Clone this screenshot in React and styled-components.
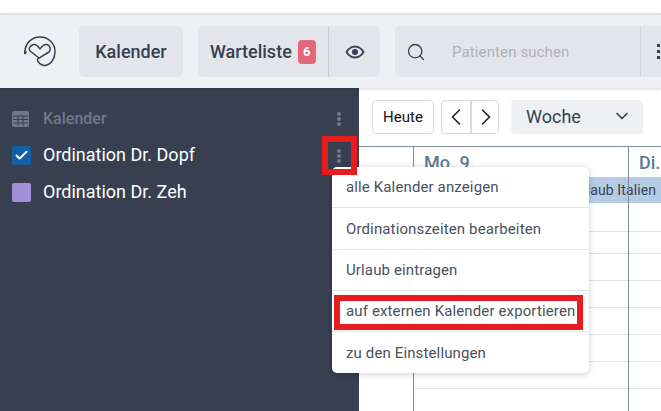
import React from "react"
import styled, { createGlobalStyle } from "styled-components"
import { Search, Check, ChevronDown, ChevronLeft, ChevronRight } from "lucide-react"

const GlobalStyle = createGlobalStyle`
  html, body {
    margin: 0;
    padding: 0;
    overflow: hidden;
    background: #fff;
    font-family: Roboto, "Liberation Sans", sans-serif;
  }
  * { box-sizing: border-box; }
`

const Page = styled.div`
  position: relative;
  width: 661px;
  height: 411px;
  overflow: hidden;
  display: flex;
  flex-direction: column;
  padding-top: 13px;
`

const Header = styled.header`
  position: relative;
  z-index: 2;
  height: 75px;
  flex: none;
  background: #eef0f4;
  border-top: 2px solid #e2e2e2;
  box-shadow: 0 1px 3px rgba(0, 0, 0, 0.16);
  display: flex;
  align-items: center;
  padding: 0 0 0 24px;
  color: #373f51;
`

const Logo = styled.svg`
  width: 32px;
  height: 32px;
  margin-right: 23px;
  flex: none;
`

const Group = styled.div`
  height: 51px;
  flex: none;
  display: flex;
  align-items: center;
  background: #e4e5ea;
  border-radius: 5px;
  width: ${(p) => p.$width}px;
  margin-right: ${(p) => p.$gap || 0}px;
`

const NavLabel = styled.span`
  font-size: 18px;
  font-weight: 500;
  color: #373f51;
  white-space: nowrap;
`

const CenterCell = styled.div`
  flex: 1;
  height: 100%;
  display: flex;
  align-items: center;
  justify-content: center;
`

const WaitCell = styled.div`
  width: 131px;
  height: 100%;
  display: flex;
  align-items: center;
  padding-left: 12px;
  border-right: 1px solid #c9cad0;
`

const Badge = styled.span`
  width: 18px;
  height: 24px;
  margin-left: 6px;
  border-radius: 4px;
  background: #e5687a;
  color: #fff;
  font-size: 13px;
  font-weight: 700;
  display: flex;
  align-items: center;
  justify-content: center;
`

const SearchCell = styled.div`
  width: 246px;
  height: 100%;
  display: flex;
  align-items: center;
  padding-left: 11px;
  border-right: 1px solid #d2d3d8;
  color: #373f51;
`

const SearchText = styled.span`
  margin-left: 26px;
  font-size: 15px;
  letter-spacing: 0.12px;
  color: #b0b2b7;
`

const HeaderDots = styled.span`
  margin-left: 16px;
  display: flex;
  flex-direction: column;
  gap: 3px;
  i {
    width: 3px;
    height: 3px;
    background: #373f51;
  }
`

const Body = styled.div`
  flex: 1;
  display: flex;
  min-height: 0;
`

const Sidebar = styled.aside`
  width: 359px;
  flex: none;
  background: #373f51;
  padding: 12px 12px 0 12px;
`

const SideRow = styled.div`
  height: 37px;
  display: flex;
  align-items: center;
`

const SideTitle = styled.span`
  margin-left: 14px;
  font-size: 16px;
  font-weight: 500;
  color: #70798a;
`

const SideName = styled.span`
  margin-left: 12px;
  padding-bottom: 2px;
  font-size: 18px;
  color: #fff;
`

const Box = styled.span`
  width: 19px;
  height: 19px;
  border-radius: 2px;
  flex: none;
  display: flex;
  align-items: center;
  justify-content: center;
  background: ${(p) => p.$color};
  color: #fff;
`

const Kebab = styled.span`
  margin-left: auto;
  margin-right: 4px;
  width: 8px;
  display: flex;
  flex-direction: column;
  align-items: center;
  gap: 1px;
  i {
    width: 4px;
    height: 4px;
    border-radius: 50%;
    background: #70798a;
  }
`

const Main = styled.main`
  flex: 1;
  min-width: 0;
  background: #fff;
`

const Toolbar = styled.div`
  height: 58px;
  display: flex;
  align-items: center;
  padding-left: 13px;
`

const TodayButton = styled.div`
  width: 62px;
  height: 34px;
  border: 1px solid #d8dbe0;
  border-radius: 4px;
  display: flex;
  align-items: center;
  justify-content: center;
  font-size: 15px;
  color: #111;
  margin-right: 7px;
`

const ArrowGroup = styled.div`
  width: 58px;
  height: 34px;
  border: 1px solid #d8dbe0;
  border-radius: 4px;
  display: flex;
  margin-right: 12px;
  color: #222;
`

const ArrowCell = styled.div`
  flex: 1;
  display: flex;
  align-items: center;
  justify-content: center;
  & + & {
    border-left: 2px solid #d8dbe0;
  }
`

const ViewSelect = styled.div`
  width: 132px;
  height: 34px;
  border-radius: 4px;
  background: #eef0f4;
  display: flex;
  align-items: center;
  justify-content: space-between;
  padding: 0 11px 2px 15px;
  font-size: 18px;
  color: #373f51;
`

const Grid = styled.div`
  border-top: 1px solid #7f8c9b;
  display: grid;
  grid-template-columns: 54px 215px 1fr;
  height: 265px;
`

const Column = styled.div`
  min-width: 0;
  position: relative;
  border-left: ${(p) => (p.$line ? "1px solid #7f8c9b" : "none")};
`

const DayHead = styled.div`
  height: 30px;
  padding: 5px 0 0 10px;
  font-size: 18px;
  font-weight: 500;
  color: #5f7896;
`

/* the event runs over the next day, whose column line stays on top */
const EventBar = styled.div`
  height: 26px;
  width: ${(p) => (p.$span ? "248px" : "auto")};
  background: ${(p) => (p.$span ? "#b5cde4" : "transparent")};
  padding-right: 6px;
  color: #373f51;
  font-size: 14px;
  letter-spacing: 0.1px;
  line-height: 26px;
  white-space: nowrap;
  text-align: right;
`

const Slot = styled.div`
  height: ${(p) => p.$h}px;
  border-bottom: 1px solid #dfe2e6;
`

const Menu = styled.div`
  position: absolute;
  z-index: 3;
  left: 332px;
  top: 167px;
  width: 257px;
  height: 206px;
  background: #fff;
  border-radius: 5px;
  box-shadow: 0 1px 6px rgba(0, 0, 0, 0.2);
`

const MenuItem = styled.div`
  height: ${(p) => p.$h}px;
  padding-left: 14px;
  display: flex;
  align-items: center;
  font-size: 15px;
  letter-spacing: 0.13px;
  color: #4a5060;
  white-space: nowrap;
  border-bottom: ${(p) => (p.$last ? "none" : "1px solid #e4e5e8")};
`

const Mark = styled.div`
  position: absolute;
  z-index: 4;
  border: 6px solid #e81c1e;
  left: ${(p) => p.$x}px;
  top: ${(p) => p.$y}px;
  width: ${(p) => p.$w}px;
  height: ${(p) => p.$h}px;
`

const slots = [29, 22, 27, 27, 27, 27, 27, 27]
const menuItems = [
  ["alle Kalender anzeigen", 41],
  ["Ordinationszeiten bearbeiten", 42],
  ["Urlaub eintragen", 41],
  ["auf externen Kalender exportieren", 41],
  ["zu den Einstellungen", 41],
]

function Dots() {
  return (
    <Kebab>
      <i />
      <i />
      <i />
    </Kebab>
  )
}

export default function App() {
  return (
    <Page>
      <GlobalStyle />
      <Header>
        <Logo viewBox="0 0 32 32" fill="none" stroke="#373f51" strokeWidth="1.5" strokeLinecap="round" strokeLinejoin="round">
          <path d="M1 16C1 7 8 1 16 1c8.500 0 15 6.500 15 14.500 0 7.500-4 13-9.500 14-3 .5-5.500-1.500-7.500-4-.8-1-.8-2 .2-2.800L25 16c2.500-3 1-7-2.500-7.500-2.500-.3-4.500 1.500-6.500 4.500-2-3-4-4.800-6-4.500-3.500.5-5.500 3.500-4.500 6L15 22" />
          <circle cx="1" cy="16.500" r="1" fill="#373f51" />
        </Logo>
        <Group $width={104} $gap={15}>
          <CenterCell>
            <NavLabel>Kalender</NavLabel>
          </CenterCell>
        </Group>
        <Group $width={182} $gap={15}>
          <WaitCell>
            <NavLabel>Warteliste</NavLabel>
            <Badge>6</Badge>
          </WaitCell>
          <CenterCell>
            <svg width="20" height="20" viewBox="0 0 20 20" fill="none" stroke="#373f51" strokeWidth="1.8">
              <path d="M1.500 10S4.500 4.500 10 4.500 18.500 10 18.500 10 15.500 15.500 10 15.500 1.500 10 1.500 10z" />
              <circle cx="10" cy="10" r="3" fill="#373f51" stroke="none" />
            </svg>
          </CenterCell>
        </Group>
        <Group $width={300}>
          <SearchCell>
            <Search size={20} strokeWidth={1.6} />
            <SearchText>Patienten suchen</SearchText>
          </SearchCell>
          <HeaderDots>
            <i />
            <i />
            <i />
          </HeaderDots>
        </Group>
      </Header>
      <Body>
        <Sidebar>
          <SideRow>
            <svg width="17" height="16" viewBox="0 0 17 16">
              <rect width="17" height="16" rx="2" fill="#70798a" />
              <path d="M1 5h15M1 8.500h15M1 12h15M6 5v10M11 5v10" stroke="#373f51" strokeWidth="1" />
            </svg>
            <SideTitle>Kalender</SideTitle>
            <Dots />
          </SideRow>
          <SideRow>
            <Box $color="#1460a5">
              <Check size={15} strokeWidth={3} />
            </Box>
            <SideName>Ordination Dr. Dopf</SideName>
            <Dots />
          </SideRow>
          <SideRow>
            <Box $color="#a390d8" />
            <SideName>Ordination Dr. Zeh</SideName>
          </SideRow>
        </Sidebar>
        <Main>
          <Toolbar>
            <TodayButton>Heute</TodayButton>
            <ArrowGroup>
              <ArrowCell>
                <ChevronLeft size={28} strokeWidth={1.4} />
              </ArrowCell>
              <ArrowCell>
                <ChevronRight size={28} strokeWidth={1.4} />
              </ArrowCell>
            </ArrowGroup>
            <ViewSelect>
              Woche
              <ChevronDown size={20} strokeWidth={2} />
            </ViewSelect>
          </Toolbar>
          <Grid>
            <Column />
            <Column $line>
              <DayHead>Mo. 9.</DayHead>
              <EventBar $span>Urlaub Italien</EventBar>
              {slots.map((h, i) => (
                <Slot key={i} $h={h} />
              ))}
            </Column>
            <Column $line>
              <DayHead>Di.</DayHead>
              <EventBar />
              {slots.map((h, i) => (
                <Slot key={i} $h={h} />
              ))}
            </Column>
          </Grid>
        </Main>
      </Body>
      <Menu>
        {menuItems.map(([label, h], i) => (
          <MenuItem key={label} $h={h} $last={i === menuItems.length - 1}>
            {label}
          </MenuItem>
        ))}
      </Menu>
      <Mark $x={322} $y={136} $w={35} $h={39} />
      <Mark $x={334} $y={295} $w={249} $h={35} />
    </Page>
  )
}
